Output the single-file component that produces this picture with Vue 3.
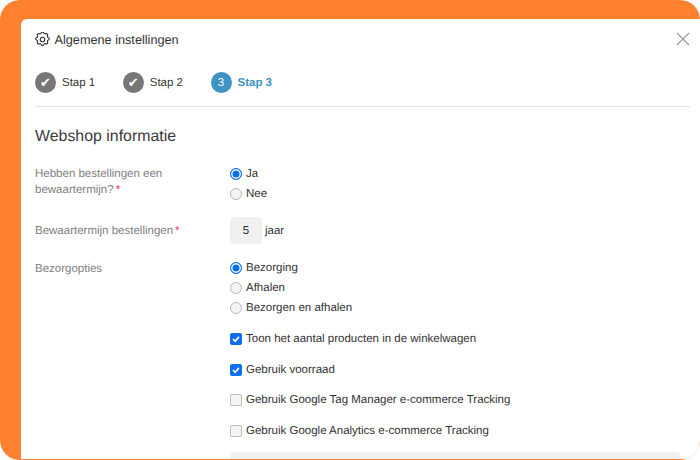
<script setup>
const steps = [
  { label: 'Stap 1', done: true },
  { label: 'Stap 2', done: true },
  { label: 'Stap 3', done: false, num: 3 },
]
const checks = [
  { label: 'Toon het aantal producten in de winkelwagen', on: true },
  { label: 'Gebruik voorraad', on: true },
  { label: 'Gebruik Google Tag Manager e-commerce Tracking', on: false },
  { label: 'Gebruik Google Analytics e-commerce Tracking', on: false },
]
</script>

<template>
  <div class="frame">
    <div class="modal">
      <header class="head">
        <svg class="gear" width="15" height="15" viewBox="2 2 20 20" fill="none" stroke="#333" stroke-width="1.500" stroke-linecap="round" stroke-linejoin="round">
          <circle cx="12" cy="12" r="3" />
          <path d="M10.300 3.200c.4-1.600 3-1.600 3.400 0a1.800 1.800 0 0 0 2.600 1.100c1.400-.9 3.300 1 2.400 2.400a1.800 1.800 0 0 0 1.100 2.600c1.600.4 1.600 3 0 3.400a1.800 1.800 0 0 0-1.100 2.600c.9 1.400-1 3.300-2.400 2.400a1.800 1.800 0 0 0-2.600 1.100c-.4 1.600-3 1.600-3.400 0a1.800 1.800 0 0 0-2.600-1.100c-1.400.9-3.300-1-2.400-2.400a1.800 1.800 0 0 0-1.100-2.600c-1.600-.4-1.600-3 0-3.400a1.800 1.800 0 0 0 1.100-2.600c-.9-1.400 1-3.300 2.400-2.400a1.800 1.800 0 0 0 2.600-1.100z" />
        </svg>
        <span class="title">Algemene instellingen</span>
        <svg class="close" width="14" height="14" viewBox="0 0 14 14" stroke="#999" stroke-width="1.100" fill="none">
          <path d="M1 1l12 12M13 1L1 13" />
        </svg>
      </header>

      <nav class="steps">
        <div v-for="s in steps" :key="s.label" class="step" :class="{ active: !s.done }">
          <span class="dot">
            <span v-if="s.done" class="tick">✔</span>
            <template v-else>{{ s.num }}</template>
          </span>
          <span class="step-label">{{ s.label }}</span>
        </div>
      </nav>

      <h2 class="section">Webshop informatie</h2>

      <div class="row first">
        <div class="label two">
          <div>Hebben bestellingen een</div>
          <div>bewaartermijn?<span class="req">*</span></div>
        </div>
        <div class="field radios">
          <label class="opt"><span class="radio on"></span>Ja</label>
          <label class="opt"><span class="radio"></span>Nee</label>
        </div>
      </div>

      <div class="row term">
        <div class="label mid">Bewaartermijn bestellingen<span class="req">*</span></div>
        <div class="field inline">
          <span class="num">5</span>
          <span>jaar</span>
        </div>
      </div>

      <div class="row delivery">
        <div class="label three">Bezorgopties</div>
        <div class="field">
          <div class="radios">
            <label class="opt"><span class="radio on"></span>Bezorging</label>
            <label class="opt"><span class="radio"></span>Afhalen</label>
            <label class="opt"><span class="radio"></span>Bezorgen en afhalen</label>
          </div>
          <div class="checks">
            <label v-for="c in checks" :key="c.label" class="opt">
              <span class="box" :class="{ on: c.on }">
                <svg v-if="c.on" width="12" height="12" viewBox="0 0 12 12" fill="none" stroke="#fff" stroke-width="2"><path d="M2.500 6.200l2.500 2.500 4.500-5.200" /></svg>
              </span>
              {{ c.label }}
            </label>
          </div>
          <div class="grey-box"></div>
        </div>
      </div>
    </div>
  </div>
</template>

<style>
html, body { margin: 0; background: #fff; }
</style>

<style scoped>
.frame {
  width: 700px;
  height: 460px;
  box-sizing: border-box;
  padding: 19px 0 1px 20.500px;
  background: #ff8130;
  border-radius: 20px;
  overflow: hidden;
  font-family: "Liberation Sans", Arial, sans-serif;
  font-size: 11.500px;
  color: #333;
  text-rendering: geometricPrecision;
}
.modal {
  height: 100%;
  background: #fff;
  border-radius: 6px 0 0 0;
  box-sizing: border-box;
  padding: 0 10px 0 14.500px;
  overflow: hidden;
}
.head {
  display: flex;
  align-items: center;
  height: 40px;
  gap: 4.500px;
}
.gear { flex: none; }
.title { font-size: 12.700px; color: #333; padding-top: 1px; }
.close { margin-left: auto; margin-right: 0; }
.steps {
  display: flex;
  gap: 27.500px;
  height: 47px;
  align-items: center;
  border-bottom: 1px solid #e2e2e2;
}
.step { display: flex; align-items: center; gap: 6px; }
.step-label { padding-top: 1px; }
.dot {
  width: 21px;
  height: 21px;
  border-radius: 50%;
  background: #777;
  color: #fff;
  display: flex;
  align-items: center;
  justify-content: center;
  font-size: 11.500px;
}
.tick { font-size: 13px; line-height: 1; }
.step.active .dot { background: #3f92c4; }
.step.active .step-label { color: #3f92c4; font-weight: 700; }
.section {
  font-weight: 400;
  font-size: 15.900px;
  color: #3a3a3a;
  margin: 20px 0 0;
  line-height: 20px;
}
.row { display: flex; }
.row.first { margin-top: 17px; }
.row.term { margin-top: 13px; }
.row.delivery { margin-top: 14px; }
.label {
  width: 195px;
  flex: none;
  color: #808080;
  line-height: 16px;
  padding-right: 30px;
  box-sizing: border-box;
}
.label.two { padding-top: 2px; }
.label.three { padding-top: 3px; }
.label.mid { align-self: center; padding-top: 1px; }
.req { color: #f0304f; margin-left: 2px; }
.radios { display: flex; flex-direction: column; }
.opt {
  display: flex;
  align-items: center;
  gap: 4px;
  height: 20px;
}
.radio {
  width: 12px;
  height: 12px;
  border-radius: 50%;
  border: 1px solid #b8b8b8;
  background: #f4f4f4;
  box-sizing: border-box;
  flex: none;
}
.radio.on {
  border: 1px solid #0b6ff2;
  background: #0b6ff2;
  box-shadow: inset 0 0 0 1.500px #fff;
}
.inline { display: flex; align-items: center; gap: 3px; }
.num {
  width: 32px;
  height: 27px;
  background: #f0f0f0;
  border-radius: 4px;
  display: flex;
  align-items: center;
  justify-content: center;
  box-sizing: border-box;
}
.checks { display: flex; flex-direction: column; gap: 10.500px; margin-top: 11px; }
.box {
  width: 12px;
  height: 12px;
  border-radius: 2px;
  border: 1px solid #bbb;
  background: #f4f4f4;
  box-sizing: border-box;
  display: flex;
  align-items: center;
  justify-content: center;
  flex: none;
}
.box.on { background: #0b6ff2; border-color: #0b6ff2; }
.grey-box {
  margin-top: 11px;
  width: 450px;
  height: 40px;
  background: #f0f0f0;
  border-radius: 4px;
}
</style>
